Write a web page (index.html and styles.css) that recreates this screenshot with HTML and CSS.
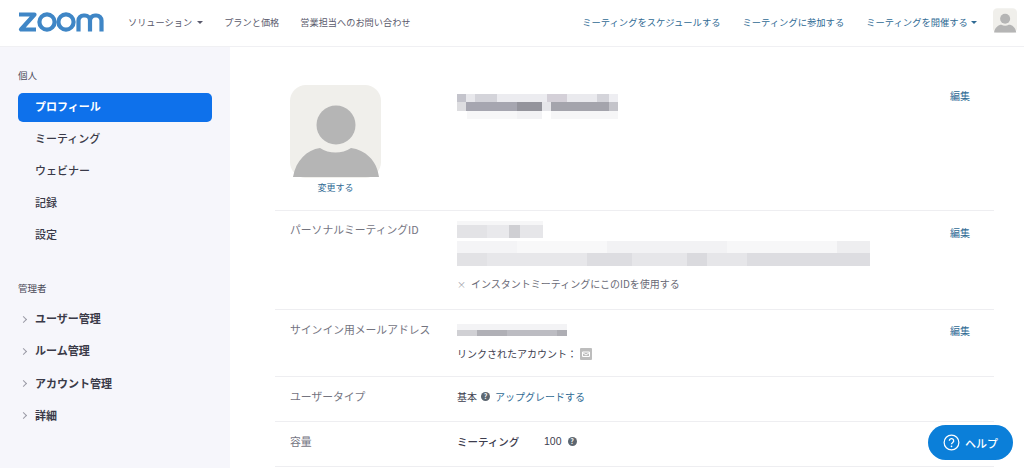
FILE: index.html
```html
<!DOCTYPE html>
<html lang="ja">
<head>
  <meta charset="UTF-8" />
  <title>マイプロフィール - Zoom</title>
  <link rel="stylesheet" href="styles.css">
</head>
<body>

<header class="topbar">
  <svg class="logo" viewBox="0 0 86 20" width="86" height="20" aria-label="zoom">
    <path d="M1 2.500h15.500L3 17.500h15" fill="none" stroke="#3f86c6" stroke-width="4.200" stroke-linejoin="round"/>
    <circle cx="29" cy="10" r="7.600" fill="none" stroke="#3f86c6" stroke-width="4.200"/>
    <circle cx="48" cy="10" r="7.600" fill="none" stroke="#3f86c6" stroke-width="4.200"/>
    <path d="M60.500 19.500V8.500a5 5 0 0 1 5-5h1.500a5 5 0 0 1 5 5v11M72 8.500a5 5 0 0 1 5-5h1.500a5 5 0 0 1 5 5v11" fill="none" stroke="#3f86c6" stroke-width="4.200"/>
  </svg>
  <nav class="nav-left">
    <a>ソリューション <i class="caret"></i></a>
    <a>プランと価格</a>
    <a>営業担当へのお問い合わせ</a>
  </nav>
  <nav class="nav-right">
    <a>ミーティングをスケジュールする</a>
    <a>ミーティングに参加する</a>
    <a>ミーティングを開催する <i class="caret"></i></a>
  </nav>
  <svg class="avatar-small" viewBox="0 0 91 93" width="24" height="25">
    <rect width="91" height="93" rx="16" fill="#f0efeb"/>
    <circle cx="46" cy="40" r="19" fill="#b5b5b5"/>
    <path d="M4 92c3-20 20-30 28-29 8 5 20 5 28 0 10-1 26 9 28 29z" fill="#b5b5b5"/>
  </svg>
</header>

<div class="page">
  <aside class="sidebar">
    <div class="side-title">個人</div>
    <a class="side-item active">プロフィール</a>
    <a class="side-item">ミーティング</a>
    <a class="side-item">ウェビナー</a>
    <a class="side-item">記録</a>
    <a class="side-item">設定</a>

    <div class="side-title admin">管理者</div>
    <a class="side-item sub">ユーザー管理</a>
    <a class="side-item sub">ルーム管理</a>
    <a class="side-item sub">アカウント管理</a>
    <a class="side-item sub">詳細</a>
  </aside>

  <main class="content">
    <section class="row row-photo">
      <div class="photo">
        <svg viewBox="0 0 91 93" width="91" height="93">
          <rect width="91" height="93" rx="16" fill="#f0efeb"/>
          <circle cx="46" cy="40" r="19.500" fill="#b5b5b5"/>
          <path d="M3 92c3-17 14-27 27-29 9 6 22 6 31 0 14 2 26 12 28 29z" fill="#b5b5b5"/>
        </svg>
        <a class="link change">変更する</a>
      </div>
      <div class="value"><div class="mosaic m-name"></div></div>
      <a class="link edit">編集</a>
    </section>

    <section class="row row-pmi">
      <div class="label">パーソナルミーティングID</div>
      <div class="value">
        <div class="mosaic m-id"></div>
        <div class="mosaic m-url"></div>
        <div class="check"><span class="cross">×</span>インスタントミーティングにこのIDを使用する</div>
      </div>
      <a class="link edit">編集</a>
    </section>

    <section class="row row-mail">
      <div class="label">サインイン用メールアドレス</div>
      <div class="value">
        <div class="mosaic m-mail"></div>
        <div class="linked">リンクされたアカウント：
          <svg class="mail-icon" viewBox="0 0 12 12" width="12" height="12">
            <rect width="12" height="12" rx="1" fill="#bdbdbd"/>
            <path d="M2.500 4h7v4.500h-7zM2.500 4.500L6 7l3.500-2.500" fill="none" stroke="#fff" stroke-width="1"/>
          </svg>
        </div>
      </div>
      <a class="link edit">編集</a>
    </section>

    <section class="row row-type">
      <div class="label">ユーザータイプ</div>
      <div class="value inline">
        <span>基本</span><i class="qmark">?</i><a class="link upgrade">アップグレードする</a>
      </div>
    </section>

    <section class="row row-cap">
      <div class="label">容量</div>
      <div class="value inline capacity">
        <span class="cap-name">ミーティング</span><span class="cap-num">100</span><i class="qmark">?</i>
      </div>
    </section>
  </main>
</div>

<button class="help">
  <svg viewBox="0 0 18 18" width="17" height="17">
    <circle cx="9" cy="9" r="7.800" fill="none" stroke="#fff" stroke-width="1.300"/>
    <path d="M6.700 7.200a2.300 2.300 0 1 1 3.400 2c-.8.500-1.100.9-1.100 1.700" fill="none" stroke="#fff" stroke-width="1.400"/>
    <circle cx="9" cy="13" r=".9" fill="#fff"/>
  </svg>
  ヘルプ
</button>

</body>
</html>
```

FILE: styles.css
```css
* {
  box-sizing: border-box;
  margin: 0;
  padding: 0;
}

html, body {
  height: 468px;
  overflow: hidden;
}

body {
  font-family: 'Noto Sans CJK JP', 'Liberation Sans', sans-serif;
  background: #ffffff;
  color: #3d3d4e;
}

/* Top bar */
.topbar {
  height: 47px;
  display: flex;
  align-items: center;
  padding: 0 7px 3px 18px;
  border-bottom: 1px solid #f0f0f3;
}

.logo {
  flex: none;
}

.nav-left, .nav-right {
  display: flex;
}

.nav-left {
  margin-left: 24px;
  gap: 21px;
  font-size: 9.200px;
  color: #5a5a6c;
}

.nav-right {
  margin-left: auto;
  gap: 22px;
  font-size: 9.300px;
  color: #2f6a94;
}

.caret {
  display: inline-block;
  margin-left: 3px;
  vertical-align: 2px;
  border-left: 3px solid transparent;
  border-right: 3px solid transparent;
  border-top: 3px solid currentColor;
}

.nav-right .caret {
  margin-left: 1px;
}

.avatar-small {
  margin: 0 0 3px 16px;
  flex: none;
}

/* Sidebar */
.page {
  display: flex;
  height: 421px;
}

.sidebar {
  width: 230px;
  flex: none;
  background: #f6f6fb;
  padding: 21px 18px 0;
}

.side-title {
  font-size: 9.500px;
  line-height: 14px;
  color: #4a4a58;
  margin-bottom: 11px;
}

.side-title.admin {
  margin-top: 30px;
  margin-bottom: 11px;
}

.side-item {
  display: flex;
  align-items: center;
  height: 29px;
  margin-bottom: 3.200px;
  padding: 0 0 4px 17px;
  font-size: 11px;
  font-weight: 500;
  color: #3a3a48;
  border-radius: 5px;
}

.side-item.active {
  background: #0e71eb;
  color: #ffffff;
  font-weight: 700;
}

.side-item.sub {
  position: relative;
  font-weight: 700;
}

.side-item.sub::before {
  content: "";
  position: absolute;
  left: 3px;
  top: 11px;
  width: 4px;
  height: 4px;
  border-top: 1px solid #9a9aa5;
  border-right: 1px solid #9a9aa5;
  transform: rotate(45deg);
}

/* Profile rows */
.content {
  flex: 1;
  padding: 0 30px 0 45px;
}

.row {
  display: flex;
  padding-left: 15px;
  border-bottom: 1px solid #eeeef1;
}

.row-photo {
  height: 164px;
  padding-top: 38px;
}

.row-pmi { height: 99px; padding-top: 9px; }
.row-mail { height: 67px; padding-top: 10px; }
.row-type { height: 45px; padding-top: 10px; }
.row-cap { height: 45px; padding-top: 10px; }

.photo {
  width: 167px;
  flex: none;
}

.photo svg {
  display: block;
}

.change {
  display: block;
  width: 91px;
  margin-top: 3px;
  text-align: center;
  font-size: 9px;
  line-height: 14px;
}

.label {
  width: 167px;
  flex: none;
  font-size: 10.800px;
  line-height: 18px;
  color: #74747f;
}

.value {
  flex: 1;
  font-size: 10px;
  color: #3d3d4e;
}

.value.inline {
  display: flex;
  align-items: center;
  height: 18px;
}

.value.capacity {
  font-size: 10.500px;
}

.capacity .qmark {
  margin-left: 6px;
}

.link {
  color: #2f6a94;
}

.edit {
  width: 44px;
  flex: none;
  font-size: 10px;
  line-height: 14px;
  margin-top: 4px;
}

.row-pmi .edit { margin-top: 6px; }

/* Pixelated private data */
.mosaic {
  filter: blur(0.6px);
}

.m-name {
  width: 161px;
  height: 25px;
  margin-top: 9px;
  background:
    linear-gradient(90deg, #c4c4cc 0 9px, #e8e8ec 9px 18px, #d4d4da 18px 40px, #ececf0 40px 90px, #d4d0d8 90px 110px, #eaeaee 110px 140px, #d4d4da 140px 152px, #eeeef2 152px) 0 0 / 100% 8px no-repeat,
    linear-gradient(90deg, #dddde0 0 9px, #a6a6b0 9px 60px, #94949c 60px 85px, #e6e6ea 85px 94px, #a4a4ac 94px 152px, #c4c4ca 152px) 0 8px / 100% 9px no-repeat,
    linear-gradient(90deg, #ffffff 0 10px, #f7f7f8 10px 60px, #f2f2f4 60px 85px, #ffffff 85px 94px, #f6f6f7 94px) 0 17px / 100% 8px no-repeat;
}

.m-id {
  width: 86px;
  height: 17px;
  margin-top: 1px;
  background:
    linear-gradient(#f6f6f7, #f6f6f7) 0 0 / 100% 4px no-repeat,
    linear-gradient(90deg, #e3e3e6 0 30px, #e9e9ec 30px 52px, #cfcfd3 52px 63px, #e6e6e9 63px) 0 4px / 100% 13px no-repeat;
}

.m-url {
  width: 413px;
  height: 25px;
  margin-top: 3px;
  background:
    linear-gradient(90deg, #f4f4f6 0 60px, #f8f8f9 60px 150px, #f2f2f4 150px 270px, #f7f7f8 270px 380px, #eeeef0 380px) 0 0 / 100% 12px no-repeat,
    linear-gradient(90deg, #e2e2e5 0 30px, #e7e7ea 30px 130px, #dddde1 130px 175px, #e6e6e9 175px 230px, #dadade 230px 250px, #e6e6e9 250px 290px, #dddde1 290px) 0 12px / 100% 13px no-repeat;
}

.m-mail {
  width: 110px;
  height: 16px;
  margin-top: 4px;
  background:
    linear-gradient(#f3f3f5, #f3f3f5) 0 0 / 100% 6px no-repeat,
    linear-gradient(90deg, #d0d0d4 0 20px, #b0b0b6 20px 50px, #bcbcc2 50px 100px, #aeaeb4 100px) 0 6px / 100% 6px no-repeat;
}

.check {
  margin-top: 11px;
  line-height: 14px;
  color: #6a6a76;
}

.cross {
  margin-right: 5px;
  color: #a0a0a8;
  font-size: 9px;
}

.linked {
  display: flex;
  align-items: center;
  gap: 3px;
  margin-top: 7px;
  line-height: 14px;
}

.qmark {
  display: inline-block;
  width: 9px;
  height: 9px;
  margin-left: 4px;
  border-radius: 50%;
  background: #5c6670;
  color: #ffffff;
  font-size: 7px;
  font-style: normal;
  font-weight: 700;
  line-height: 9px;
  text-align: center;
}

.upgrade {
  margin-left: 5px;
}

.cap-name {
  width: 87px;
  font-weight: 500;
}

.cap-num {
  font-family: 'Liberation Sans', sans-serif;
}

/* Floating help */
.help {
  position: fixed;
  left: 928px;
  top: 425px;
  width: 85px;
  height: 35px;
  display: flex;
  align-items: center;
  justify-content: center;
  gap: 5px;
  border: none;
  border-radius: 18px;
  background: #0b7fd9;
  color: #ffffff;
  font-family: inherit;
  font-size: 11px;
  font-weight: 500;
}
```
